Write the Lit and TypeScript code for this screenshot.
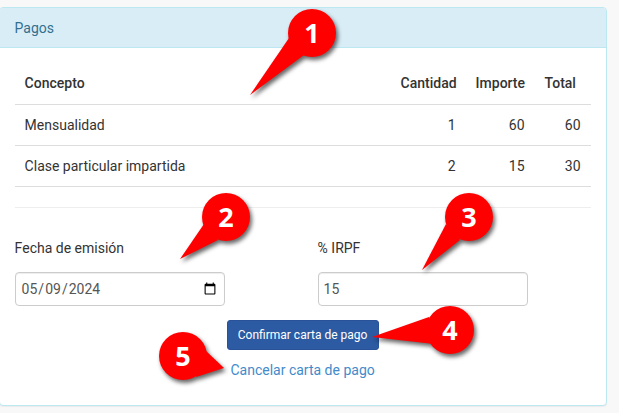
import { LitElement, html, css, svg } from "lit";
import { customElement } from "lit/decorators.js";

interface Callout { n: string; cx: number; cy: number; tail: string; }

const CALLOUTS: Callout[] = [
  { n: "1", cx: 312, cy: 33, tail: "M250 95 L289 38 L304 55 Z" },
  { n: "2", cx: 226, cy: 217, tail: "M180 259 L204 224 L218 240 Z" },
  { n: "3", cx: 469, cy: 217, tail: "M422 270 L446 224 L460 240 Z" },
  { n: "4", cx: 450, cy: 330, tail: "M372 337 L429 317 L434 344 Z" },
  { n: "5", cx: 183, cy: 356, tail: "M224 368 L205 350 L196 377 Z" },
];

@customElement("app-root")
export class AppRoot extends LitElement {
  static styles = css`
    :host {
      display: block;
      position: relative;
      width: 619px;
      height: 413px;
      overflow: hidden;
      background: #f8f8f8;
      font-family: Roboto, sans-serif;
      font-size: 14px;
      line-height: 20px;
      color: #333;
    }
    .page {
      padding-top: 7px;
      margin-left: -1.4px;
      width: 608px;
    }
    .panel {
      box-sizing: border-box;
      height: 399px;
      background: #fff;
      border: 1px solid #bce8f1;
      border-radius: 4px;
      box-shadow: 0 1px 1px rgba(0, 0, 0, 0.05);
    }
    .heading {
      height: 40px;
      box-sizing: border-box;
      padding: 10px 15px;
      background: #d9edf7;
      border-bottom: 1px solid #bce8f1;
      border-radius: 3px 3px 0 0;
      color: #31708f;
    }
    .body {
      padding: 15px;
    }
    table {
      width: 576px;
      border-collapse: collapse;
      table-layout: fixed;
    }
    th, td {
      box-sizing: border-box;
      padding: 10px;
      text-align: right;
      font-weight: 400;
      border-bottom: 1px solid #ddd;
      height: 41px;
    }
    th {
      font-weight: 500;
    }
    .left {
      text-align: left;
    }
    hr {
      margin: 20px 0;
      border: 0;
      border-top: 1px solid #eee;
    }
    .form {
      display: grid;
      grid-template-columns: 303px 210px;
      margin-top: 30px;
    }
    label {
      display: block;
      margin-bottom: 14px;
    }
    input {
      display: block;
      box-sizing: border-box;
      width: 210px;
      height: 34px;
      padding: 6px 5px;
      border: 1px solid #ccc;
      border-radius: 4px;
      background: #fff;
      color: #555;
      font-family: Roboto, sans-serif;
      font-size: 14px;
      box-shadow: inset 0 1px 1px rgba(0, 0, 0, 0.075);
    }
    .actions {
      display: flex;
      flex-direction: column;
      align-items: center;
      margin-top: 14px;
      width: 606px;
      margin-left: -15px;
    }
    .btn {
      box-sizing: border-box;
      width: 152px;
      height: 30px;
      padding: 0;
      border: 1px solid #2a5298;
      border-radius: 3px;
      background: #2c5ba3;
      color: #fff;
      font-family: Roboto, sans-serif;
      font-size: 12px;
    }
    .link {
      margin-top: 10px;
      color: #428bca;
      text-decoration: none;
    }
    .marks {
      position: absolute;
      left: 0;
      top: 0;
      pointer-events: none;
    }
    .mark {
      filter: drop-shadow(2px 3px 2px rgba(0, 0, 0, 0.6));
    }
    .num {
      fill: #fff;
      font-family: "Open Sans", sans-serif;
      font-weight: 700;
      font-size: 27px;
      text-anchor: middle;
    }
  `;

  render() {
    return html`
      <div class="page">
        <section class="panel">
          <div class="heading">Pagos</div>
          <div class="body">
            <table>
              <colgroup>
                <col />
                <col style="width:75px" />
                <col style="width:69px" />
                <col style="width:56px" />
              </colgroup>
              <thead>
                <tr>
                  <th class="left">Concepto</th>
                  <th>Cantidad</th>
                  <th>Importe</th>
                  <th class="left">Total</th>
                </tr>
              </thead>
              <tbody>
                <tr><td class="left">Mensualidad</td><td>1</td><td>60</td><td>60</td></tr>
                <tr><td class="left">Clase particular impartida</td><td>2</td><td>15</td><td>30</td></tr>
              </tbody>
            </table>
            <hr />
            <div class="form">
              <div>
                <label>Fecha de emisión</label>
                <input type="date" value="2024-05-09" />
              </div>
              <div>
                <label>% IRPF</label>
                <input type="text" value="15" />
              </div>
            </div>
            <div class="actions">
              <button class="btn">Confirmar carta de pago</button>
              <a class="link" href="#">Cancelar carta de pago</a>
            </div>
          </div>
        </section>
      </div>
      <svg class="marks" width="619" height="413" viewBox="0 0 619 413">
        ${CALLOUTS.map(
          (c) => svg`
            <g class="mark">
              <path d=${c.tail} fill="#f00" />
              <circle cx=${c.cx} cy=${c.cy} r="24" fill="#f00" />
            </g>
            <text class="num" x=${c.cx} y=${c.cy + 10}>${c.n}</text>
          `
        )}
      </svg>
    `;
  }
}
